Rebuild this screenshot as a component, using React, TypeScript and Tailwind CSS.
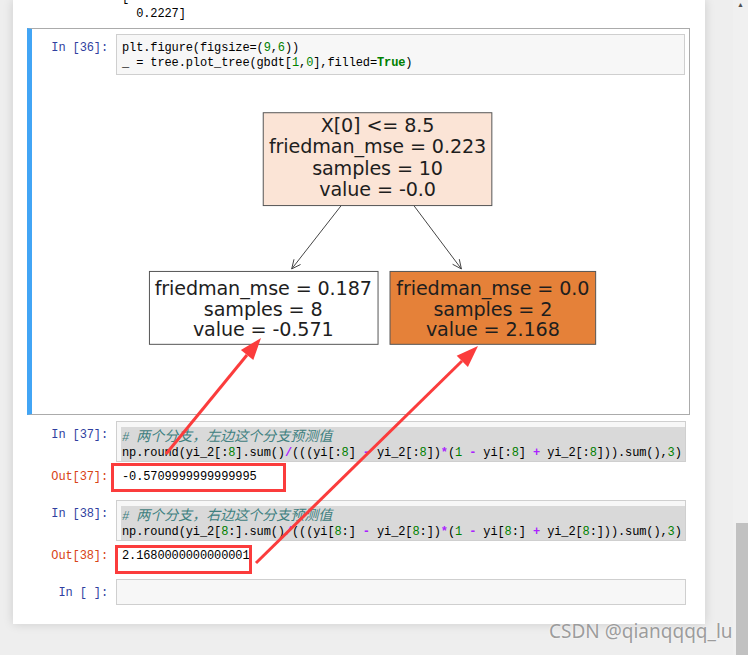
import React from 'react';

const mono = "font-['Liberation_Mono','Noto_Sans_CJK_SC',monospace] text-[12px] tracking-[-0.12px] leading-[15px]";

function G({ c }: { c: string }) {
  return <span className="text-[#008000]">{c}</span>;
}

function P({ c }: { c: string }) {
  return <span className="font-bold text-[#aa22ff]">{c}</span>;
}

function Prompt({ label, out }: { label: string; out?: boolean }) {
  return (
    <div className={`w-[84px] shrink-0 whitespace-pre pr-[8px] text-right ${out ? 'text-[#d84315]' : 'pt-[7px] text-[#303f9f]'}`}>
      {label}
    </div>
  );
}

function Comment({ side }: { side: string }) {
  return (
    <div className="whitespace-pre italic text-[#408080]">
      {'# '}
      <span className="font-['Noto_Sans_CJK_SC',sans-serif] text-[14px] leading-[15px] tracking-normal">
        {`两个分支，${side}边这个分支预测值`}
      </span>
    </div>
  );
}

function Idx({ s }: { s: string }) {
  return s === 'l' ? <>:<G c="8" /></> : <><G c="8" />:</>;
}

function RoundLine({ s }: { s: string }) {
  return (
    <div className="whitespace-pre">
      {'np.round(yi_2['}<Idx s={s} />{'].sum()'}
      <P c="/" />
      {'(((yi['}<Idx s={s} />{'] '}
      <P c="-" />
      {' yi_2['}<Idx s={s} />{'])'}
      <P c="*" />
      {'('}<G c="1" />{' '}
      <P c="-" />
      {' yi['}<Idx s={s} />{'] '}
      <P c="+" />
      {' yi_2['}<Idx s={s} />{'])).sum(),'}
      <G c="3" />
      {')'}
    </div>
  );
}

function TreeFigure() {
  return (
    <svg width="570" height="334" viewBox="0 0 570 334" className="font-['DejaVu_Sans',sans-serif]">
      <g stroke="#444" strokeWidth="1" fill="none">
        <path d="M226 130 L176 194 M184.9 189.5 L176 194 L178.3 184.3" />
        <path d="M298 130 L346 194 M343.9 184.2 L346 194 L337.2 189.3" />
      </g>
      <rect x="147.5" y="37.5" width="229" height="93" fill="#fbe4d6" stroke="#555" />
      <rect x="33.5" y="196.5" width="229" height="73" fill="#ffffff" stroke="#555" />
      <rect x="274.5" y="196.5" width="206" height="73" fill="#e58139" stroke="#555" />
      <g fill="#1e1e1e" fontSize="19.2" textAnchor="middle" dominantBaseline="central">
        <text x="262" y="50.5">X[0] &lt;= 8.5</text>
        <text x="262" y="71.5">friedman_mse = 0.223</text>
        <text x="262" y="93.5">samples = 10</text>
        <text x="262" y="114.5">value = -0.0</text>
        <text x="147.5" y="213.5">friedman_mse = 0.187</text>
        <text x="147.5" y="234.5">samples = 8</text>
        <text x="147.5" y="254.5">value = -0.571</text>
        <text x="377.5" y="213.5">friedman_mse = 0.0</text>
        <text x="377.5" y="234.5">samples = 2</text>
        <text x="377.5" y="254.5">value = 2.168</text>
      </g>
    </svg>
  );
}

export default function App() {
  return (
    <div className="relative flex h-[655px] w-[748px] overflow-hidden bg-[#eeeeee]">
      {/* notebook page */}
      <div className={`ml-[13px] flex h-[624px] w-[692px] shrink-0 flex-col bg-white text-black shadow-[0_0_10px_rgba(0,0,0,0.14)] ${mono}`}>
        {/* tail of previous output */}
        <div className="h-[28px] shrink-0 overflow-hidden pl-[109px]">
          <div className="-mt-[9px] whitespace-pre">[</div>
          <div className="whitespace-pre pt-[1px]">{'  0.2227]'}</div>
        </div>

        {/* In [36] selected */}
        <div className="ml-[14px] w-[663px] border border-[#ababab] border-l-[5px] border-l-[#42a5f5] pb-[5px] pr-[4px] pt-[5px]">
          <div className="flex">
            <Prompt label="In [36]:" />
            <div className="h-[41px] flex-1 border border-[#cfcfcf] bg-[#f7f7f7] pb-[3px] pl-[5px] pt-[6px]">
              <div className="whitespace-pre">
                {'plt.figure(figsize=('}<G c="9" />{','}<G c="6" />{'))'}
              </div>
              <div className="whitespace-pre">
                {'_ = tree.plot_tree(gbdt['}<G c="1" />{','}<G c="0" />{'],filled='}
                <span className="font-bold text-[#008000]">True</span>{')'}
              </div>
            </div>
          </div>
          <div className="flex h-[334px]">
            <div className="w-[84px] shrink-0" />
            <TreeFigure />
          </div>
        </div>

        {/* In [37] */}
        <div className="ml-[14px] w-[663px] border border-transparent border-l-[5px] pb-[5px] pr-[3px] pt-[5px]">
          <div className="flex">
            <Prompt label="In [37]:" />
            <div className="h-[41px] flex-1 border border-[#cfcfcf] bg-[#f7f7f7] pb-[3px] pl-[4px] pt-[5px]">
              <div className="bg-[#d9d9d9] pl-[1px] pt-[1px]">
                <Comment side="左" />
                <RoundLine s="l" />
              </div>
            </div>
          </div>
          <div className="flex h-[26px] pt-[8px]">
            <Prompt label="Out[37]:" out />
            <div className="whitespace-pre pl-[6px]">-0.5709999999999995</div>
          </div>
        </div>

        {/* In [38] */}
        <div className="ml-[14px] w-[663px] border border-transparent border-l-[5px] pb-[5px] pr-[3px] pt-[5px]">
          <div className="flex">
            <Prompt label="In [38]:" />
            <div className="h-[41px] flex-1 border border-[#cfcfcf] bg-[#f7f7f7] pb-[3px] pl-[4px] pt-[5px]">
              <div className="bg-[#d9d9d9] pl-[1px] pt-[1px]">
                <Comment side="右" />
                <RoundLine s="r" />
              </div>
            </div>
          </div>
          <div className="flex h-[26px] pt-[8px]">
            <Prompt label="Out[38]:" out />
            <div className="whitespace-pre pl-[6px]">2.1680000000000001</div>
          </div>
        </div>

        {/* In [ ] */}
        <div className="ml-[14px] w-[663px] border border-transparent border-l-[5px] pb-[5px] pr-[3px] pt-[5px]">
          <div className="flex">
            <Prompt label="In [ ]:" />
            <div className="h-[26px] flex-1 border border-[#cfcfcf] bg-[#f7f7f7]" />
          </div>
        </div>
      </div>

      <div className="flex-1" />

      {/* scrollbar */}
      <div className="flex w-[15px] shrink-0 flex-col justify-between bg-[#f0f0f0]">
        <div className="flex justify-center pt-[1px] text-[7px] leading-[7px] text-[#505050]">▲</div>
        <div className="ml-[3px] h-[132px] bg-[#c1c1c1]" />
      </div>

      {/* red annotations */}
      <svg className="pointer-events-none absolute left-0 top-0" width="748" height="655">
        <g stroke="#fb3c3c" strokeWidth="3" fill="none">
          <rect x="112.5" y="464.5" width="172" height="26" />
          <rect x="116.5" y="546.5" width="134" height="26" />
          <line x1="166" y1="454" x2="247" y2="355" />
          <line x1="256" y1="563" x2="462" y2="361" />
        </g>
        <g fill="#fb3c3c">
          <polygon points="261,338 253.3,360.1 240.9,349.9" />
          <polygon points="478,346 467.9,367.1 456.7,355.7" />
        </g>
      </svg>

      {/* watermark */}
      <div className="absolute left-[549px] top-[619px] whitespace-pre font-['Noto_Sans',sans-serif] text-[19px] leading-[24px] text-[#9c9c9c] [text-shadow:0_0_2px_#ffffff]">
        CSDN @qianqqqq_lu
      </div>
    </div>
  );
}
